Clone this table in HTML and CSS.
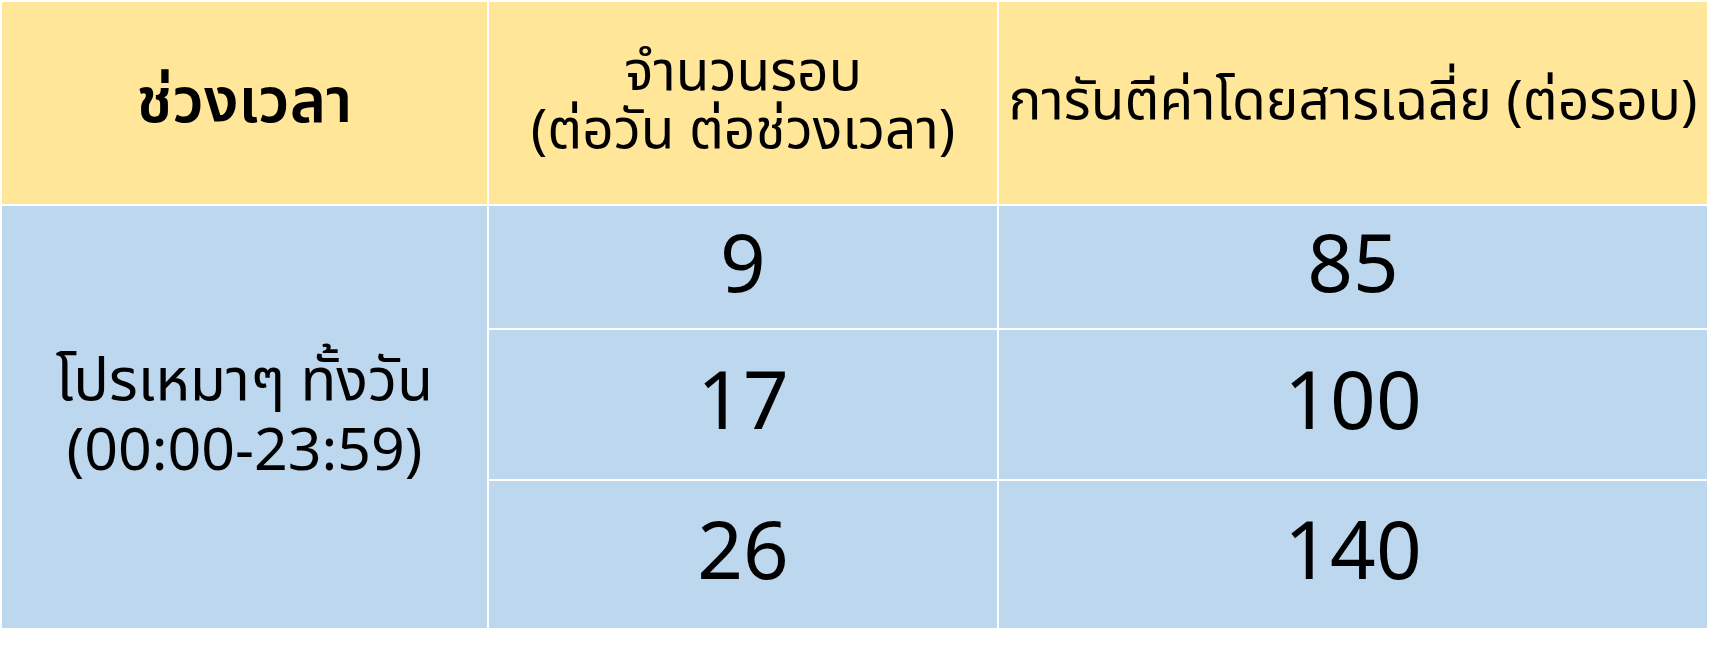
FILE: index.html
```html
<!DOCTYPE html>
<html lang="th">
<head>
<meta charset="utf-8">
<title>ตารางค่าโดยสาร</title>
<link rel="stylesheet" href="styles.css">
</head>
<body>
<div class="fare-table">
  <div class="cell head head-main">ช่วงเวลา</div>
  <div class="cell head"><span>จำนวนรอบ</span><span>(ต่อวัน ต่อช่วงเวลา)</span></div>
  <div class="cell head"><span>การันตีค่าโดยสารเฉลี่ย (ต่อรอบ)</span></div>
  <div class="cell body period"><span>โปรเหมาๆ ทั้งวัน</span><span>(00:00-23:59)</span></div>
  <div class="cell body num">9</div>
  <div class="cell body num">85</div>
  <div class="cell body num">17</div>
  <div class="cell body num">100</div>
  <div class="cell body num">26</div>
  <div class="cell body num">140</div>
</div>
</body>
</html>
```
FILE: styles.css
```css
html, body {
  margin: 0;
  padding: 0;
  background: #ffffff;
}
body {
  font-family: "Noto Sans Thai", "Leelawadee UI", "Tahoma", "Noto Sans", sans-serif;
  color: #000000;
}
.fare-table {
  display: grid;
  grid-template-columns: 485px 508px 708px;
  grid-template-rows: 202px 122px 149px 147px;
  gap: 2px;
  padding: 2px;
  background: #ffffff;
  width: 1705px;
}
.cell {
  display: flex;
  flex-direction: column;
  align-items: center;
  justify-content: center;
  text-align: center;
  white-space: nowrap;
}
.head {
  background: #ffe699;
  font-size: 55px;
  line-height: 58px;
}
.head-main {
  font-size: 62px;
  font-weight: 600;
}
.body {
  background: #bdd7ee;
}
.period {
  grid-row: 2 / span 3;
  font-size: 59px;
  line-height: 70px;
}
.num {
  font-size: 80px;
}
```
